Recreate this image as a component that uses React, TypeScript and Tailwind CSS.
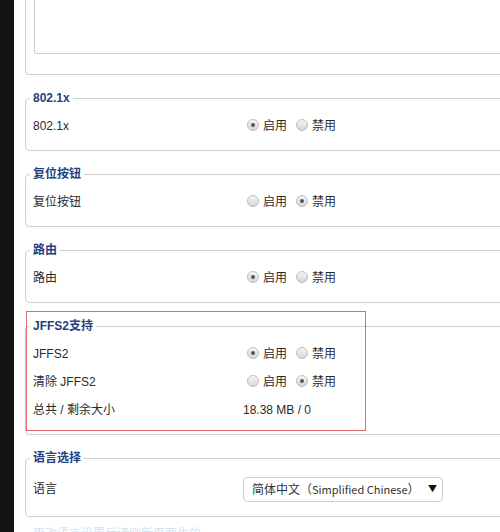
import React from "react";

const FONT = { fontFamily: '"Liberation Sans", "Noto Sans CJK SC", sans-serif' };
const SELFONT = { fontFamily: '"Noto Sans CJK SC", "Liberation Sans", sans-serif' };

function Radio({ checked }: { checked?: boolean }) {
  return (
    <span className="mb-[3px] flex h-[12px] w-[12px] shrink-0 items-center justify-center rounded-full border border-[#bdbdbd] bg-linear-to-b from-[#f6f6f6] to-[#d6d6d6]">
      {checked && <span className="h-[4px] w-[4px] rounded-full bg-[#555555]" />}
    </span>
  );
}

function RadioPair({ on }: { on: boolean }) {
  return (
    <div className="flex items-center">
      <span className="ml-[4px]">
        <Radio checked={on} />
      </span>
      <span className="ml-[4px]">启用</span>
      <span className="ml-[9px]">
        <Radio checked={!on} />
      </span>
      <span className="ml-[4px]">禁用</span>
    </div>
  );
}

function Row({ label, children, tall }: { label: string; children: React.ReactNode; tall?: boolean }) {
  return (
    <div className={`flex items-center pl-[3px] ${tall ? "h-[34px]" : "h-[28px]"}`}>
      <div className="w-[210px] shrink-0">{label}</div>
      <div className="flex items-center">{children}</div>
    </div>
  );
}

function Group({ title, children }: { title: string; children: React.ReactNode }) {
  return (
    <fieldset className="mt-[15px] w-[495px] shrink-0 rounded-[4px] border border-[#cfcfcf] px-[4px] pb-[10px]">
      <legend className="px-[3px] text-[12px] leading-[16px] font-bold text-[#24437e]">{title}</legend>
      <div className="pt-[6px]">{children}</div>
    </fieldset>
  );
}

export default function App() {
  return (
    <div className="relative flex h-[532px] w-[500px] overflow-hidden bg-white text-[12px] text-[#2a2a2a]" style={FONT}>
      <div className="h-full w-[14px] shrink-0 bg-[#141414]" />
      <div className="flex shrink-0 flex-col self-start pl-[11px]">
        <div className="h-[75px] w-[495px] shrink-0 rounded-b-[4px] border border-t-0 border-[#cfcfcf] pl-[8px]">
          <div className="h-[54px] w-full rounded-b-[3px] border border-t-0 border-[#cccccc]" />
        </div>

        <Group title="802.1x">
          <Row label="802.1x">
            <RadioPair on />
          </Row>
        </Group>

        <Group title="复位按钮">
          <Row label="复位按钮">
            <RadioPair on={false} />
          </Row>
        </Group>

        <Group title="路由">
          <Row label="路由">
            <RadioPair on />
          </Row>
        </Group>

        <Group title="JFFS2支持">
          <Row label="JFFS2">
            <RadioPair on />
          </Row>
          <Row label="清除 JFFS2">
            <RadioPair on={false} />
          </Row>
          <Row label="总共 / 剩余大小">
            <span>18.38 MB / 0</span>
          </Row>
        </Group>

        <Group title="语言选择">
          <Row label="语言" tall>
            <div
              className="flex h-[25px] w-[200px] items-center justify-between rounded-[4px] border border-[#cccccc] bg-white pr-[5px] pl-[8px] text-[12px] text-[#333]"
              style={SELFONT}
            >
              <span>
                简体中文（<span className="text-[11px]">Simplified Chinese</span>）
              </span>
              <span className="text-[9px] text-[#111]">▼</span>
            </div>
          </Row>
        </Group>

        <div className="mt-[9px] shrink-0 pl-[8px] text-[12px] leading-[16px] text-[#d3e4ef]">更改语言设置后请刷新页面生效。</div>
      </div>

      <div className="pointer-events-none absolute top-[311px] left-[26px] h-[120px] w-[340px] border border-[#e06a6a]" />
    </div>
  );
}
